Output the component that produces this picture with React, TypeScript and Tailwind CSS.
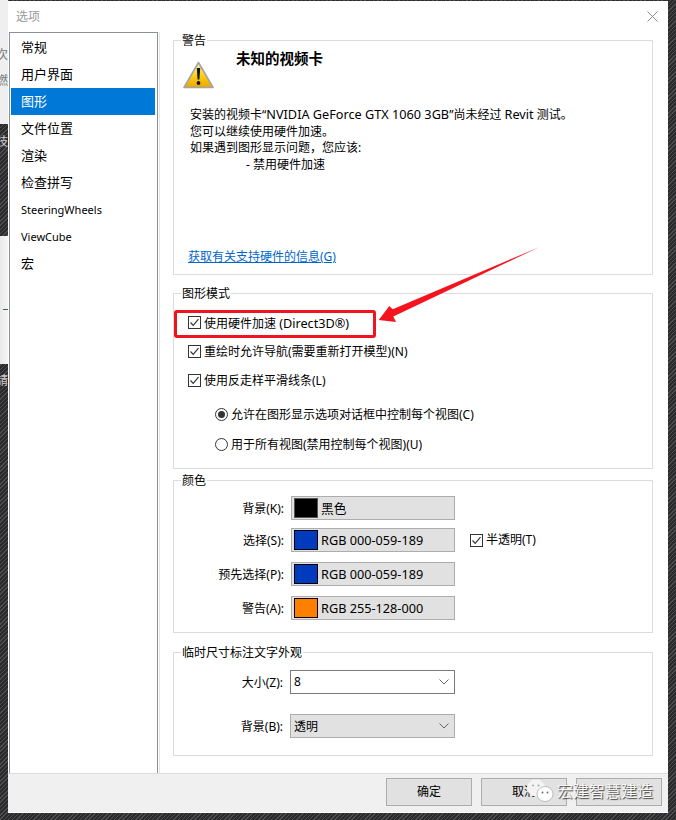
const font = { fontFamily: '"Noto Sans", "Noto Sans CJK SC", sans-serif' };

const hatch =
  "bg-[repeating-linear-gradient(135deg,#4d4d50_0,#4d4d50_1px,#2b2b2d_1px,#2b2b2d_3px)]";

const navItems = [
  { label: "常规" },
  { label: "用户界面" },
  { label: "图形", active: true },
  { label: "文件位置" },
  { label: "渲染" },
  { label: "检查拼写" },
  { label: "SteeringWheels", small: true },
  { label: "ViewCube", small: true },
  { label: "宏" },
];

const colorRows = [
  { label: "背景(K):", color: "bg-black", border: "border-[#555]", text: "黑色", cls: "" },
  { label: "选择(S):", color: "bg-[#003bbd]", border: "border-black", text: "RGB 000-059-189", cls: "mt-2", transparent: true },
  { label: "预先选择(P):", color: "bg-[#003bbd]", border: "border-black", text: "RGB 000-059-189", cls: "mt-[10px]" },
  { label: "警告(A):", color: "bg-[#ff8000]", border: "border-black", text: "RGB 255-128-000", cls: "mt-[10px]" },
];

function Checkbox() {
  return (
    <span className="w-[13px] h-[13px] shrink-0 border border-[#333] bg-white flex items-center justify-center">
      <svg width="11" height="11" viewBox="0 0 11 11" fill="none" stroke="#333" strokeWidth="1.2">
        <path d="M1.5 5.5 L4.2 8.3 L9.5 2.2" />
      </svg>
    </span>
  );
}

function Radio({ checked }: { checked?: boolean }) {
  return (
    <span className="w-[13px] h-[13px] shrink-0 rounded-full border border-[#333] bg-white flex items-center justify-center">
      {checked && <span className="w-[7px] h-[7px] rounded-full bg-[#333]" />}
    </span>
  );
}

function Chevron() {
  return (
    <svg width="10" height="6" viewBox="0 0 10 6" fill="none" stroke="#666" strokeWidth="1">
      <path d="M0.5 0.5 L5 5 L9.5 0.5" />
    </svg>
  );
}

function Group({ title, className, children }: { title: string; className: string; children: React.ReactNode }) {
  return (
    <fieldset className={`w-[480px] border border-[#dcdcdc] ${className}`}>
      <legend className="ml-[7px] px-px h-4 leading-[18px] text-xs text-black">{title}</legend>
      {children}
    </fieldset>
  );
}

function WarningIcon() {
  return (
    <svg width="31" height="28" viewBox="0 0 31 28" className="shrink-0">
      <defs>
        <linearGradient id="warn" x1="0" y1="0" x2="0" y2="1">
          <stop offset="0" stopColor="#fff6b0" />
          <stop offset="0.5" stopColor="#fcd116" />
          <stop offset="1" stopColor="#eba800" />
        </linearGradient>
      </defs>
      <path d="M15.5 1.5 L30 26.5 H1 Z" fill="url(#warn)" stroke="#a3a3a3" strokeWidth="1.6" strokeLinejoin="round" />
      <path d="M13.8 7 H17.2 L16.4 18.5 H14.6 Z" fill="#111" />
      <circle cx="15.5" cy="22" r="1.9" fill="#111" />
    </svg>
  );
}

export default function App() {
  return (
    <div className={`relative w-[676px] h-[820px] overflow-hidden ${hatch} flex`} style={font}>
      {/* Desktop behind the dialog, left edge */}
      <div className="w-2 h-full flex flex-col shrink-0 overflow-hidden text-xs">
        <div className="h-[124px] bg-[#efefef] pt-[42px] flex flex-col items-end text-[#777] leading-[26px] overflow-hidden">
          <span className="whitespace-nowrap">次</span>
          <span className="whitespace-nowrap">燃</span>
        </div>
        <div className="h-[112px] flex flex-col items-end pt-[10px] text-[#ccc] overflow-hidden">
          <span className="whitespace-nowrap">技</span>
        </div>
        <div className="h-[128px] bg-[linear-gradient(90deg,#e8e8e8,#f6f6f6)] pt-[73px] flex flex-col items-end">
          <span className="w-[5px] h-px bg-[#2f6b3f]" />
        </div>
        <div className="flex flex-col items-end pt-[9px] text-[#ccc]">
          <span className="whitespace-nowrap">請</span>
        </div>
      </div>

      <div className="w-[660px] h-[812px] mt-px bg-white flex flex-col shrink-0">
        {/* Title bar */}
        <div className="h-[31px] pl-2 pr-[10px] flex items-center justify-between shrink-0">
          <span className="text-xs text-[#9a9a9a]">选项</span>
          <svg width="11" height="11" viewBox="0 0 11 11" stroke="#8a8a8a" strokeWidth="1">
            <path d="M0.5 0.5 L10.5 10.5 M10.5 0.5 L0.5 10.5" />
          </svg>
        </div>

        <div className="flex h-[741px] shrink-0">
          {/* Left nav */}
          <ul className="ml-px w-[149px] border border-b-0 border-[#8b8f97] pt-px shrink-0">
            {navItems.map((item) => (
              <li
                key={item.label}
                className={`h-[27px] ml-px mr-[2px] pl-[10px] flex items-center ${item.small ? "text-[11px] pt-[2px]" : "text-[13px]"} ${
                  item.active ? "bg-[#0078d7] text-white" : "text-black"
                }`}
              >
                {item.label}
              </li>
            ))}
          </ul>

          <main className="ml-px border-l border-[#e4e4e4] pl-[13px] flex flex-col">
            <Group title="警告" className="h-[243px] shrink-0">
              <div className="flex pl-[9px]">
                <div className="mt-[13px]">
                  <WarningIcon />
                </div>
                <h1 className="ml-[22px] text-[14.5px] leading-5 font-bold text-black">未知的视频卡</h1>
              </div>
              <div className="mt-[17px] pl-[16px] text-xs leading-[16.7px] text-black">
                <p>
                  安装的视频卡“<span className="text-[12.7px]">NVIDIA GeForce GTX 1060 3GB</span>”尚未经过{" "}
                  <span className="text-[12.7px]">Revit</span> 测试。
                </p>
                <p>您可以继续使用硬件加速。</p>
                <p>如果遇到图形显示问题，您应该:</p>
                <p className="pl-[56px]">- 禁用硬件加速</p>
              </div>
              <a className="block mt-[75px] ml-[14px] text-xs leading-4 text-[#0066cc] underline">
                获取有关支持硬件的信息(G)
              </a>
            </Group>

            <Group title="图形模式" className="h-[184px] mt-[10px] shrink-0">
              <div className="pt-[11px] pl-[14px] text-xs text-black">
                <label className="h-5 flex items-center gap-[3px]">
                  <Checkbox />
                  <span className="pt-[2px]">
                    使用硬件加速 <span className="text-[12.7px]">(Direct3D®)</span>
                  </span>
                </label>
                <label className="h-5 mt-[9px] flex items-center gap-[3px]">
                  <Checkbox />
                  <span className="pt-[2px]">重绘时允许导航(需要重新打开模型)(N)</span>
                </label>
                <label className="h-5 mt-[9px] flex items-center gap-[3px]">
                  <Checkbox />
                  <span className="pt-[2px]">使用反走样平滑线条(L)</span>
                </label>
                <label className="h-5 mt-[14px] ml-[27px] flex items-center gap-[3px]">
                  <Radio checked />
                  <span className="pt-[2px]">允许在图形显示选项对话框中控制每个视图(C)</span>
                </label>
                <label className="h-5 mt-[10px] ml-[27px] flex items-center gap-[3px]">
                  <Radio />
                  <span className="pt-[2px]">用于所有视图(禁用控制每个视图)(U)</span>
                </label>
              </div>
            </Group>

            <Group title="颜色" className="h-[161px] mt-[3px] shrink-0">
              <div className="pt-2 text-xs text-black">
                {colorRows.map((row) => (
                  <div key={row.label} className={`flex items-center ${row.cls}`}>
                    <span className="w-[110px] pt-[2px] text-right">{row.label}</span>
                    <div className="ml-[7px] w-[164px] h-6 bg-[#e1e1e1] border border-[#adadad] flex items-center pl-[2px]">
                      <span className={`w-6 h-5 border ${row.color} ${row.border}`} />
                      <span className="ml-[3px] text-[12.7px]">{row.text}</span>
                    </div>
                    {row.transparent && (
                      <label className="ml-[15px] flex items-center gap-[3px]">
                        <Checkbox />
                        半透明(T)
                      </label>
                    )}
                  </div>
                ))}
              </div>
            </Group>

            <Group title="临时尺寸标注文字外观" className="h-[112px] mt-[11px] shrink-0">
              <div className="pt-[10px] text-xs text-black">
                <div className="flex items-center">
                  <span className="w-[109px] pt-[2px] text-right">大小(Z):</span>
                  <div className="ml-[7px] w-[165px] h-6 bg-white border border-[#7a7a7a] flex items-center justify-between pl-[3px] pr-[5px]">
                    8
                    <Chevron />
                  </div>
                </div>
                <div className="mt-5 flex items-center">
                  <span className="w-[109px] pt-[2px] text-right">背景(B):</span>
                  <div className="ml-[7px] w-[165px] h-6 bg-[#e1e1e1] border border-[#adadad] flex items-center justify-between pl-[3px] pr-[5px]">
                    <span className="pt-px">透明</span>
                    <Chevron />
                  </div>
                </div>
              </div>
            </Group>
          </main>
        </div>

        {/* Footer buttons */}
        <div className="h-[39px] bg-[#f0f0f0] border-t border-[#dcdcdc] pt-1 pr-[6px] flex justify-end gap-[9px] text-xs text-black shrink-0">
          <button className="w-[86px] h-7 bg-[#e1e1e1] border border-[#adadad]">确定</button>
          <button className="w-[86px] h-7 bg-[#e1e1e1] border border-[#adadad]">取消</button>
          <button className="w-[86px] h-7 bg-[#e1e1e1] border border-[#adadad]" />
        </div>
      </div>

      {/* Red annotation box */}
      <div className="absolute left-[174px] top-[310px] w-[202px] h-[28px] border-[3px] border-[#f0141e] rounded-[3px]" />

      {/* Red arrow */}
      <svg className="absolute left-[370px] top-[240px]" width="180" height="90" viewBox="0 0 180 90">
        <path d="M169.5 7 L22.7 69.3 L19.3 66 L8.7 80 L26 82 L23.3 76.5 Z" fill="#f5141e" />
      </svg>

      {/* Watermark */}
      <div className="absolute left-[527px] top-[779px] flex items-center">
        <svg width="27" height="24" viewBox="0 0 27 24">
          <ellipse cx="9" cy="9" rx="9" ry="8.5" fill="#f4f4f4" />
          <ellipse cx="18" cy="15" rx="8" ry="7.5" fill="#ffffff" stroke="#999" strokeWidth="0.6" />
          <circle cx="6" cy="6.5" r="1" fill="#aaa" />
          <circle cx="11.5" cy="6.5" r="1" fill="#aaa" />
          <circle cx="15.5" cy="13.5" r="0.9" fill="#666" />
          <circle cx="20.5" cy="13.5" r="0.9" fill="#666" />
        </svg>
        <span className="ml-[3px] text-base leading-5 text-[#f6f6f6] [text-shadow:1px_1px_1px_#444] whitespace-nowrap">
          宏建智慧建造
        </span>
      </div>
    </div>
  );
}
